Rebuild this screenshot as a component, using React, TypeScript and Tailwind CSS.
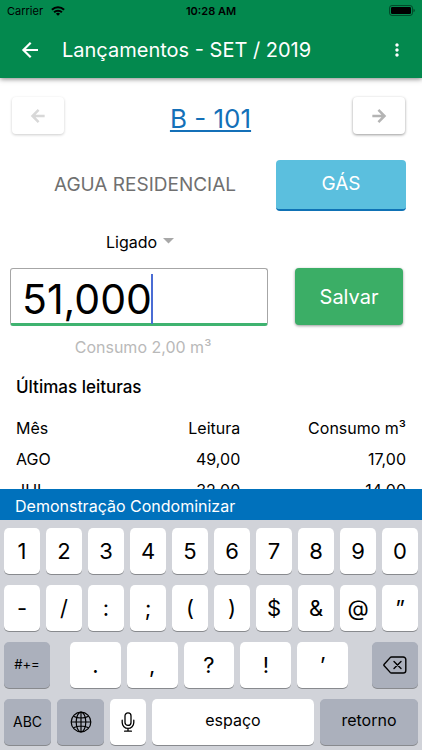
import type { ReactNode } from 'react';
import { MdMoreVert } from 'react-icons/md';

const readings = [
    { month: 'AGO', reading: '49,00', usage: '17,00' },
    { month: 'JUL', reading: '32,00', usage: '14,00' },
];

const digitKeys = ['1', '2', '3', '4', '5', '6', '7', '8', '9', '0'];
const symbolKeys = ['-', '/', ':', ';', '(', ')', '$', '&', '@', '”'];
const punctuationKeys = ['.', ',', '?', '!', '’'];

const Arrow = ({ size, strokeWidth, className }: { size: number; strokeWidth: number; className?: string }) => (
    <svg
        className={className}
        width={size}
        height={size}
        viewBox="0 0 24 24"
        fill="none"
        stroke="currentColor"
        strokeWidth={strokeWidth}
    >
        <path d="M20 12H5.6M12.7 4.7 5.4 12l7.3 7.3" />
    </svg>
);

const StatusBar = () => (
    <div className="grid h-[22px] grid-cols-3 items-center px-[7px] text-black">
        <div className="flex items-center gap-2 text-[11px]">
            Carrier
            <svg width="14" height="10" viewBox="0 0 15 11" fill="none" stroke="black" strokeWidth="2.2">
                <path d="M0.8 4.2a9.6 9.6 0 0 1 13.4 0" />
                <path d="M3.2 6.9a6.2 6.2 0 0 1 8.6 0" />
                <path d="M7.5 10.8 5.2 8.6a3.4 3.4 0 0 1 4.6 0z" fill="black" stroke="none" />
            </svg>
        </div>
        <div className="text-center text-[11px] font-semibold">10:28 AM</div>
        <svg className="justify-self-end" width="27" height="12" viewBox="0 0 27 12">
            <rect x="1.5" y="0.5" width="23" height="10" rx="2.5" fill="none" stroke="black" strokeOpacity="0.45" />
            <rect x="3" y="2" width="20" height="7" rx="1.2" fill="black" />
            <path d="M25.5 3.7v3.6c.8-.3 1.3-1 1.3-1.8s-.5-1.5-1.3-1.8z" fill="black" fillOpacity="0.5" />
        </svg>
    </div>
);

const Header = () => (
    <header className="relative z-10 bg-[#03894e] shadow-[0_1px_5px_rgba(0,0,0,0.5)]">
        <StatusBar />
        <div className="flex h-14 items-center px-[18px] text-white">
            <button type="button" aria-label="Voltar">
                <Arrow size={24} strokeWidth={2.2} />
            </button>
            <h1 className="ml-5 flex-1 text-xl">Lançamentos - SET / 2019</h1>
            <button type="button" aria-label="Mais opções" className="-mr-[3px]">
                <MdMoreVert size={20} />
            </button>
        </div>
    </header>
);

const Key = ({
    children,
    className = 'flex-1',
    dark = false,
    label,
}: {
    children: ReactNode;
    className?: string;
    dark?: boolean;
    label?: string;
}) => (
    <button
        type="button"
        aria-label={label}
        className={`flex h-[46px] items-center justify-center rounded-[5px] text-black shadow-[0_1px_0_#888a8e] ${
            dark ? 'bg-[#abb0bc]' : 'bg-white'
        } ${className}`}
    >
        {children}
    </button>
);

const Keyboard = () => (
    <div className="flex flex-col gap-[11px] bg-[#d1d3d9] px-1 pt-2 pb-[5px]">
        <div className="flex gap-[6px]">
            {digitKeys.map((key) => (
                <Key key={key} className="flex-1 text-[22px]">
                    {key}
                </Key>
            ))}
        </div>
        <div className="flex gap-[6px]">
            {symbolKeys.map((key) => (
                <Key key={key} className="flex-1 text-[22px]">
                    {key}
                </Key>
            ))}
        </div>
        <div className="flex">
            <Key dark className="w-[46px] text-[13px]">
                #+=
            </Key>
            <div className="mr-6 ml-5 flex flex-1 gap-[6px]">
                {punctuationKeys.map((key) => (
                    <Key key={key} className="flex-1 text-[22px]">
                        {key}
                    </Key>
                ))}
            </div>
            <Key dark className="w-[46px]" label="Apagar">
                <svg width="24" height="18" viewBox="0 0 24 18" fill="none" stroke="black" strokeWidth="1.4" strokeLinejoin="round" strokeLinecap="round">
                    <path d="M8.6 1h11.6a2.6 2.6 0 0 1 2.6 2.6v10.8a2.6 2.6 0 0 1-2.6 2.6H8.6a2 2 0 0 1-1.4-.6L1.2 9.8a1.2 1.2 0 0 1 0-1.6l6-6.6A2 2 0 0 1 8.6 1z" />
                    <path d="M11 5.5l7 7M18 5.5l-7 7" />
                </svg>
            </Key>
        </div>
        <div className="flex gap-[6px]">
            <Key dark className="w-[47px] text-sm">
                ABC
            </Key>
            <Key dark className="w-[47px]" label="Idioma">
                <svg width="22" height="22" viewBox="0 0 22 22" fill="none" stroke="black" strokeWidth="1.2">
                    <circle cx="11" cy="11" r="9.8" />
                    <ellipse cx="11" cy="11" rx="4.8" ry="9.8" />
                    <path d="M11 1.2v19.6M1.2 11h19.6M3.4 5.2c4.4 2.4 10.8 2.4 15.2 0M3.4 16.8c4.4-2.4 10.8-2.4 15.2 0" />
                </svg>
            </Key>
            <Key className="w-9" label="Ditado">
                <svg width="14" height="20" viewBox="0 0 14 20" fill="none" stroke="black" strokeWidth="1.3" strokeLinecap="round">
                    <rect x="4" y="0.8" width="6" height="12.6" rx="3" />
                    <path d="M1.2 8.2v2.4a5.8 5.8 0 0 0 11.6 0V8.2M7 16.4v2.8M3.6 19.2h6.8" />
                </svg>
            </Key>
            <Key className="flex-1 pb-1 text-base">espaço</Key>
            <Key dark className="w-[98px] pb-1 text-base">
                retorno
            </Key>
        </div>
    </div>
);

const App = () => (
    <div className="flex h-screen flex-col bg-white font-['Inter','Liberation_Sans',sans-serif] text-black">
        <Header />
        <main className="min-h-0 flex-1 overflow-hidden">
            <div className="flex h-[56px] items-start justify-between pt-[19px] pr-[17px] pl-3">
                <button
                    type="button"
                    disabled
                    aria-label="Anterior"
                    className="flex h-[37px] w-[52px] items-center justify-center rounded bg-white text-[#d8d8d8] shadow-[0_1px_3px_rgba(0,0,0,0.2)]"
                >
                    <Arrow size={20} strokeWidth={3} />
                </button>
                <a
                    href="#unidade"
                    className="pt-[2px] pl-1 text-[26px] text-[#1470b8] underline decoration-2 underline-offset-2"
                >
                    B - 101
                </a>
                <button
                    type="button"
                    aria-label="Próximo"
                    className="flex h-[37px] w-[52px] items-center justify-center rounded bg-white text-[#b4b4b4] shadow-[0_1px_3px_rgba(0,0,0,0.4)]"
                >
                    <Arrow size={20} strokeWidth={3} className="rotate-180" />
                </button>
            </div>

            <div className="mt-[26px] flex pr-4 pl-[14px] text-[19px]">
                <button type="button" className="flex-1 text-[#707070]">
                    AGUA RESIDENCIAL
                </button>
                <button
                    type="button"
                    className="h-[51px] w-[130px] rounded border-b-2 border-[#0f72b5] bg-[#5bbfde] text-white"
                >
                    GÁS
                </button>
            </div>

            <div className="mt-[19px] flex pl-[106px]">
                <div className="relative">
                    <select aria-label="Situação" className="h-6 appearance-none bg-transparent pr-4 text-base">
                        <option>Ligado</option>
                    </select>
                    <svg className="pointer-events-none absolute top-2 right-0" width="11" height="6" viewBox="0 0 11 6">
                        <path d="M0 0h11L5.5 5.5z" fill="#a8a8a8" />
                    </svg>
                </div>
            </div>

            <div className="mt-[14px] flex items-start pr-[19px] pl-[10px]">
                <div className="flex-1 text-center">
                    <div className="relative">
                        <input
                            aria-label="Leitura atual"
                            inputMode="decimal"
                            defaultValue="51,000"
                            className="h-[58px] w-full rounded-[3px] border border-b-[3px] border-[#a6a6a6] border-b-[#3fb370] px-[11px] pt-2 text-[41px] caret-transparent outline-none"
                        />
                        <span className="absolute top-[6px] left-[141px] h-[50px] w-[2px] bg-[#4a6cd4]" />
                    </div>
                    <p className="mt-[9px] pl-2 text-base text-[#b9b9b9]">Consumo 2,00 m³</p>
                </div>
                <button
                    type="button"
                    className="ml-[27px] h-[57px] w-[108px] rounded bg-[#3bae66] text-xl text-white shadow-[0_1px_3px_rgba(0,0,0,0.4)]"
                >
                    Salvar
                </button>
            </div>

            <div className="mt-4 px-4">
                <h2 className="text-[17px] font-medium">Últimas leituras</h2>
                <table className="mt-3 w-full table-fixed text-base">
                    <thead>
                        <tr className="h-[31px]">
                            <th className="w-1/5 text-left font-normal">Mês</th>
                            <th className="w-3/8 text-right font-normal">Leitura</th>
                            <th className="text-right font-normal">Consumo m³</th>
                        </tr>
                    </thead>
                    <tbody>
                        {readings.map((row) => (
                            <tr key={row.month} className="h-[31px]">
                                <td>{row.month}</td>
                                <td className="text-right">{row.reading}</td>
                                <td className="text-right">{row.usage}</td>
                            </tr>
                        ))}
                    </tbody>
                </table>
            </div>
        </main>
        <div className="flex h-[31px] items-center bg-[#0071bc] px-[15px] pt-[2px] text-base text-white">
            Demonstração Condominizar
        </div>
        <Keyboard />
    </div>
);

export default App;
